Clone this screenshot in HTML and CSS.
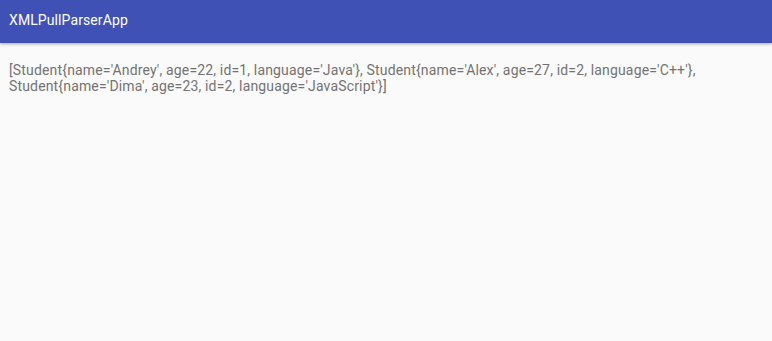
FILE: index.html
```html
<!DOCTYPE html>
<html>
<head>
<meta charset="utf-8">
<link rel="stylesheet" href="styles.css">
</head>
<body>
<div class="app">
  <header class="toolbar"><span class="title">XMLPullParserApp</span></header>
  <main class="content">
    <p class="result">[Student{name='Andrey', age=22, id=1, language='Java'}, Student{name='Alex', age=27, id=2, language='C++'}, Student{name='Dima', age=23, id=2, language='JavaScript'}]</p>
  </main>
</div>
</body>
</html>
```
FILE: styles.css
```css
html, body {
  margin: 0;
  padding: 0;
  height: 100%;
}
body {
  background: #fafafa;
  font-family: Roboto, "Noto Sans", sans-serif;
}
.app {
  display: flex;
  flex-direction: column;
  height: 100%;
}
.toolbar {
  height: 43px;
  background: #3f51b5;
  display: flex;
  align-items: center;
  padding: 0 9px;
  box-shadow: 0 1px 3px rgba(0,0,0,0.35);
  position: relative;
  z-index: 1;
}
.title {
  color: #ffffff;
  font-size: 14px;
  letter-spacing: 0.1px;
  margin-top: -4px;
}
.content {
  padding: 19px 9px;
}
.result {
  margin: 0;
  color: #737373;
  font-size: 14px;
  letter-spacing: 0.16px;
  line-height: 16px;
}
```
